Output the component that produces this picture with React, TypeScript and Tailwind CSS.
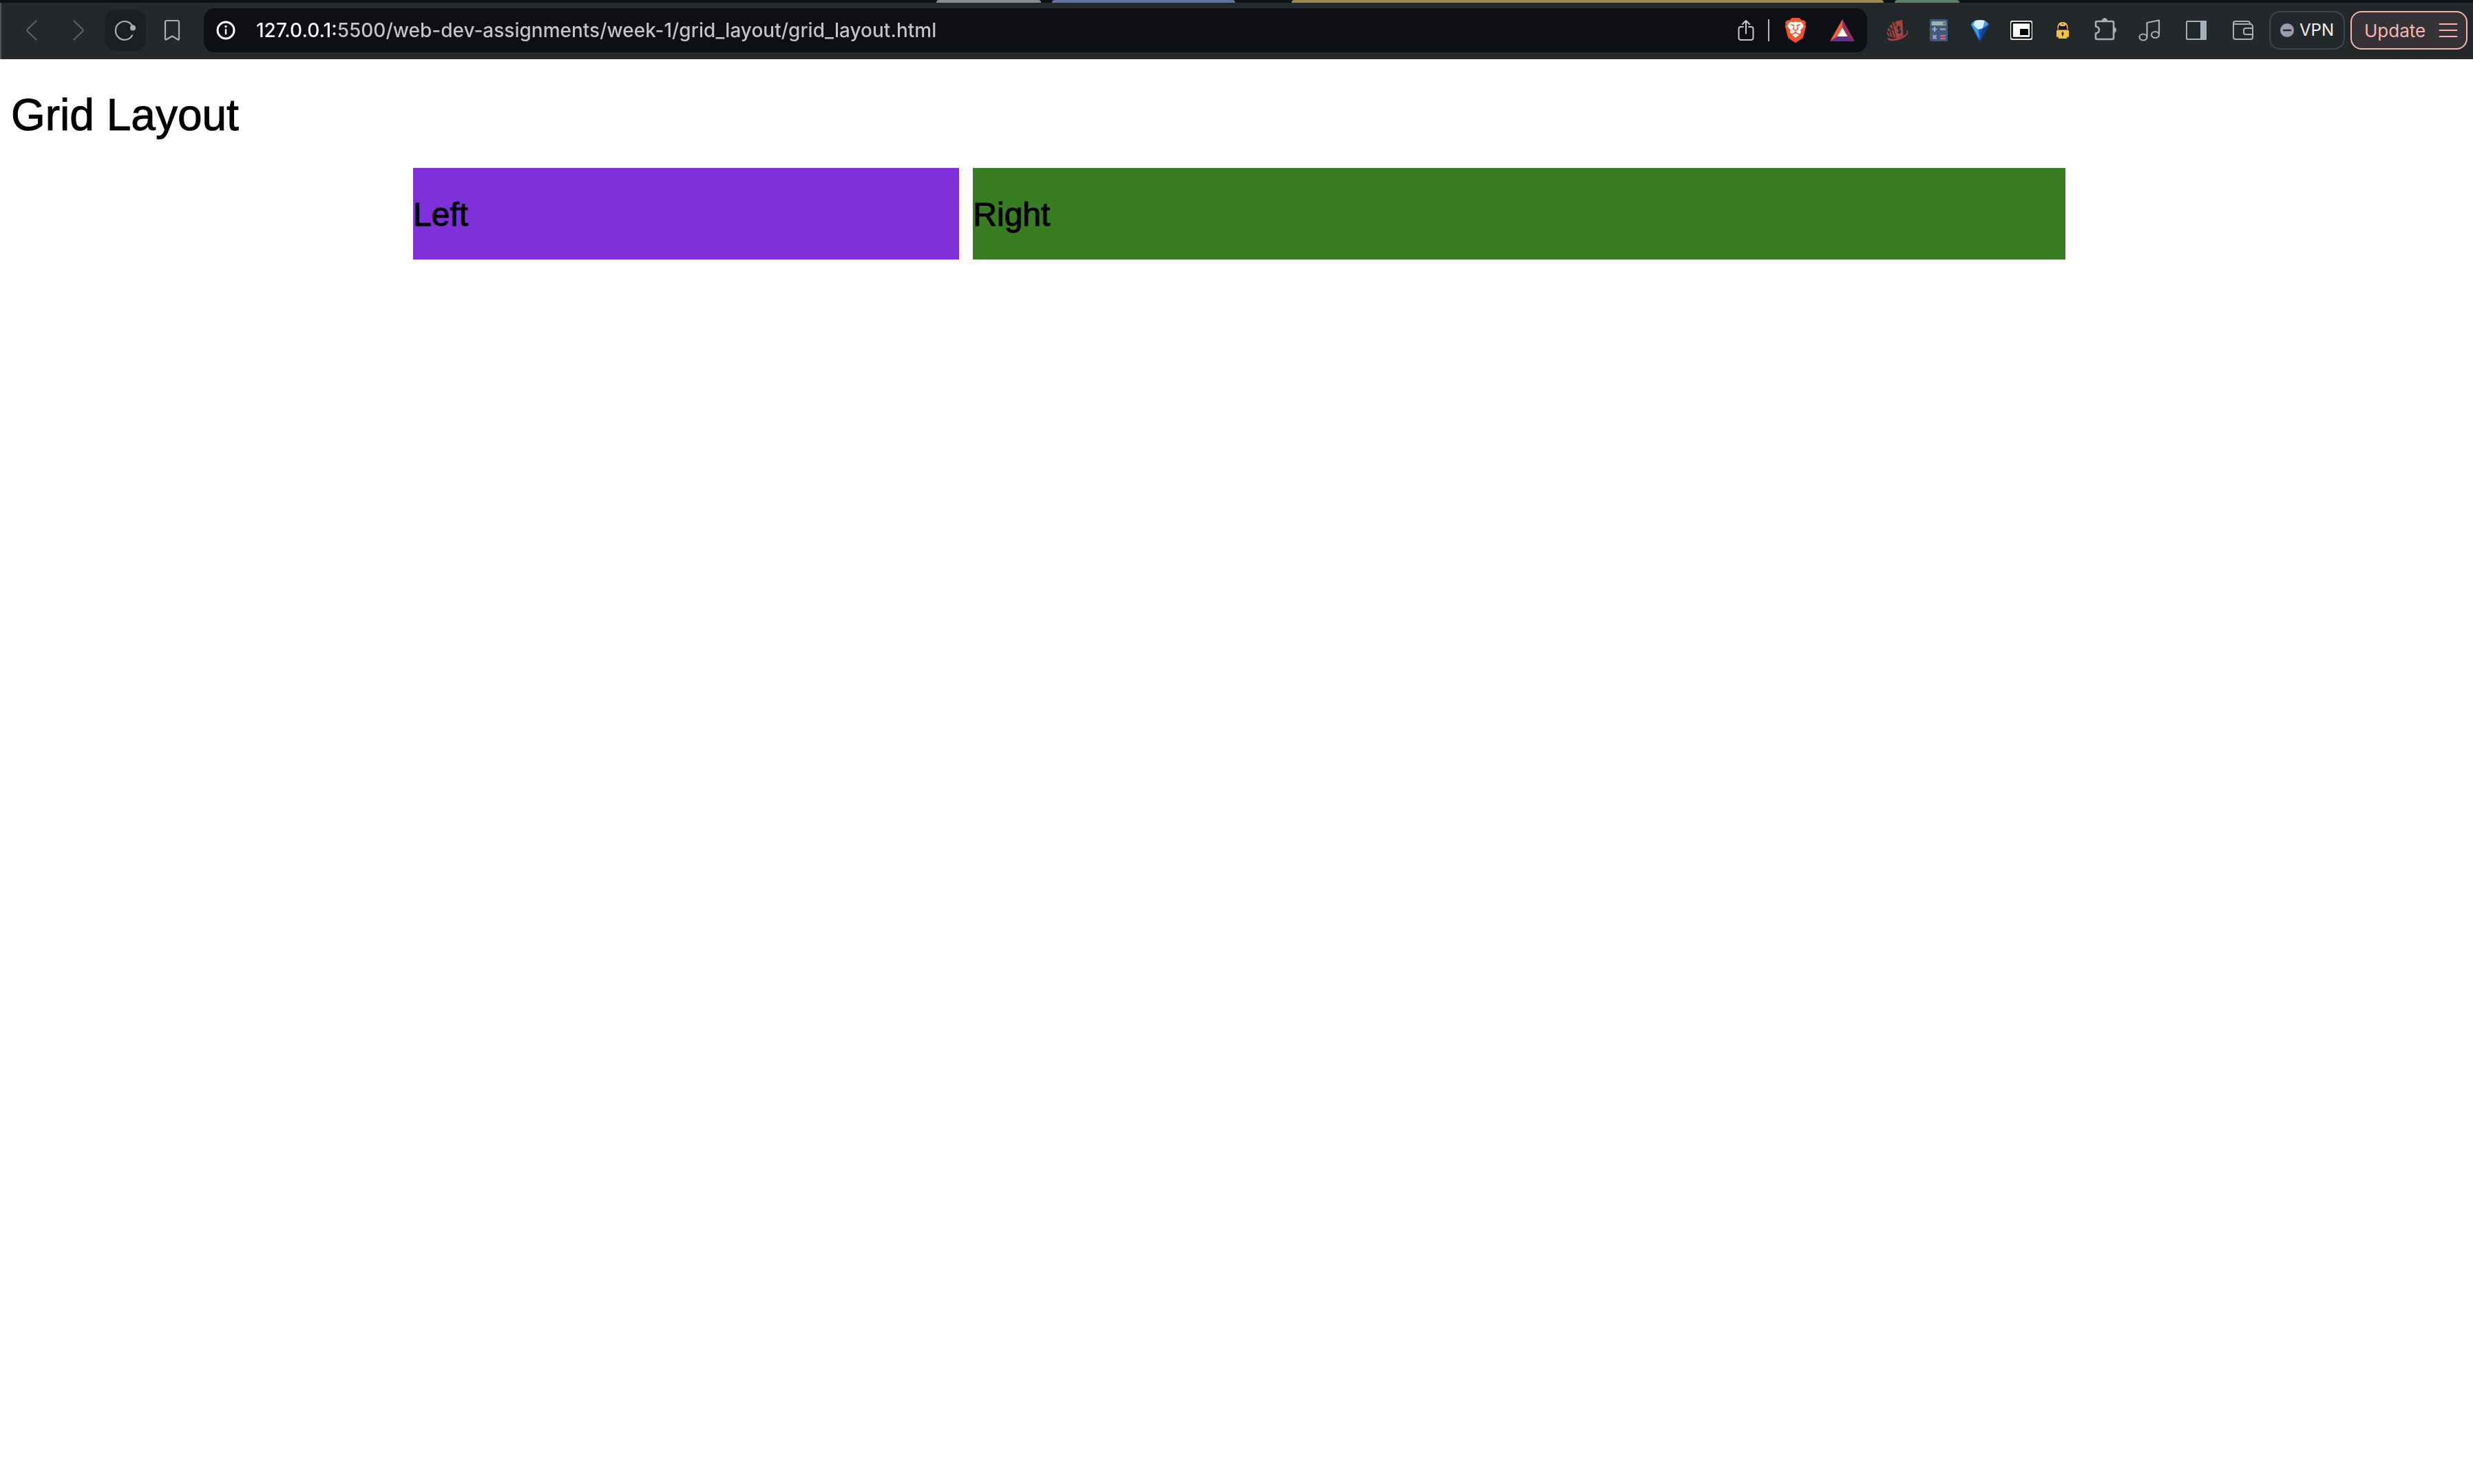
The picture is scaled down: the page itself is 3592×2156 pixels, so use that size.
import type { ReactNode } from "react";
import { SiBrave } from "react-icons/si";

function ToolButton({ label, className = "w-[60px]", children }: { label: string; className?: string; children: ReactNode }) {
  return (
    <button type="button" aria-label={label} className={`flex h-[60px] shrink-0 items-center justify-center rounded-2xl ${className}`}>
      {children}
    </button>
  );
}

const line = { fill: "none", stroke: "currentColor", strokeLinecap: "round", strokeLinejoin: "round" } as const;

function Chevron({ d }: { d: string }) {
  return (
    <svg width="16" height="30" viewBox="0 0 16 30" {...line} strokeWidth="2">
      <path d={d} />
    </svg>
  );
}

function ReloadIcon() {
  return (
    <svg width="32" height="32" viewBox="0 0 32 32" {...line} strokeWidth="2.200">
      <path d="M27 11.500A13 13.400 0 1 0 26 23.500" />
      <circle cx="27" cy="12.500" r="4" fill="currentColor" stroke="none" />
    </svg>
  );
}

function BookmarkIcon() {
  return (
    <svg width="24" height="32" viewBox="0 0 24 32" {...line} strokeWidth="2.200">
      <path d="M4 2h16q2 0 2 2v24.500q0 1.800-1.600 1L12 24.500l-8.400 5q-1.600.8-1.600-1V4q0-2 2-2z" />
    </svg>
  );
}

function InfoIcon() {
  return (
    <svg width="28" height="28" viewBox="0 0 28 28" {...line} strokeWidth="3">
      <circle cx="14" cy="14" r="12" />
      <path d="M14 13v6" strokeWidth="2.400" />
      <circle cx="14" cy="8.500" r="1.700" fill="currentColor" stroke="none" />
    </svg>
  );
}

function ShareIcon() {
  return (
    <svg width="24" height="32" viewBox="0 0 24 32" {...line} strokeWidth="2">
      <path d="M8 11H4.500Q1.500 11 1.500 14v12.500q0 3.500 3.500 3.500h14q3.500 0 3.500-3.500V14q0-3-3-3H16M12 20.500V2M7 7l5-5 5 5" />
    </svg>
  );
}

function BraveIcon() {
  return (
    <svg width="36" height="36" viewBox="0 0 36 36">
      <path fill="#fff" d="M10 5h16l6 6-5 15-9 5-9-5-5-15z" />
      <SiBrave size={36} color="#f1562b" />
    </svg>
  );
}

function RewardsIcon() {
  return (
    <svg width="36" height="32" viewBox="0 0 36 32">
      <path fill="#ff5a37" d="M18 0 0 32l11-7 7-13z" />
      <path fill="#9e2b63" d="m18 0 18 32-11-7-7-13z" />
      <path fill="#662e91" d="m0 32 11-7h14l11 7z" />
      <path fill="#fff" d="m18 12 7.500 13h-15z" />
    </svg>
  );
}

function CashIcon() {
  return (
    <svg width="32" height="32" viewBox="0 0 32 32" fill="#a7433f">
      <path d="M8.500 4.500Q13 4.500 16.500 2q3.500.5 6.500-1.500L24.500 24l-10 4z" />
      <path d="M4.800 9.500 7.500 7l6 20-2.500-.5zM1.500 14.500l2.300-2L9.500 26l-2.300-.5zM0 19.500l1.300-1.700 4.500 7.700-2-.5z" />
      <path d="M29 15.500q4.500 2.500 1 7-5.500 7-18.500 8.500-7.500.8-9-1.500L1.500 26.500q4 3 11 1.800Q26.500 25.500 30 19.500z" />
      <g fill="none" stroke="#23282b" strokeWidth="1.500">
        <path d="M20.500 12q-3.800-2-4.300.5c-.4 2.800 5 2.500 4.600 5.300-.4 2.400-3.300 2.200-4.800.7M18 9l.8 12" />
        <path d="M13.800 5q-2.600-.6-2.300 1c.3 1.500 2.700 1 2.500 2.600q-.4 1.300-2.200.5" strokeWidth="1.100" />
        <path d="M7 12.500l2 4M3.500 17l1.600 3" strokeWidth="1.200" />
      </g>
    </svg>
  );
}

function CalculatorIcon() {
  return (
    <svg width="26" height="32" viewBox="0 0 26 32">
      <rect width="26" height="32" rx="2" fill="#41597c" />
      <rect x="2.500" y="3" width="21" height="6" rx="1" fill="#9bb3a8" />
      <circle cx="21" cy="6" r="1.400" fill="none" stroke="#41504f" />
      <path d="M3.500 14.500h7M7 11v7M15 14.500h8M4.500 23l5 5.500m0-5.500-5 5.500" stroke="#a3adbd" strokeWidth="2" />
      <path d="M15 24h8M15 28h8" stroke="#c96a78" strokeWidth="2.400" />
    </svg>
  );
}

function DiamondIcon() {
  return (
    <svg width="26" height="30" viewBox="0 0 26 30">
      <path fill="#1759b5" d="M0 7q1-4 6-6 7-2 14 0 5 2 6 6L14 29q-1.500 2-3 0z" />
      <path fill="#3b9df0" d="M0 7q1-4 6-6l4.500 12L12 28z" />
      <path fill="#d9efff" d="M6 1q7-2 14 0l-3 11-6.500 2L3 7z" />
      <path fill="#4d9fe6" d="m20 1 5 5-8 6z" />
      <path fill="#0b2c68" d="m17 12-4.500 18L25 9z" opacity=".55" />
    </svg>
  );
}

function PictureIcon() {
  return (
    <svg width="32" height="28" viewBox="0 0 32 28">
      <rect width="32" height="28" rx="2.500" fill="#fff" />
      <rect x="2.500" y="3" width="27" height="22" rx="1" fill="#fff" stroke="#000" strokeWidth="2.600" />
      <rect x="14" y="12" width="12" height="9" fill="#000" />
    </svg>
  );
}

function LockIcon() {
  return (
    <svg width="18" height="24" viewBox="0 0 18 24">
      <path fill="#f5c242" d="M1.500 11V8q0-8 7.500-8t7.500 8v3z" />
      <path fill="#1d1736" d="M3.500 4.500h11l1 6.500h-13z" />
      <path fill="#f5c242" d="M5.500 4h7v2h-7zM0 13q0-1.500 2-1.500h14q2 0 2 1.500v9l-2-1-1 3H3l-1-3-2 1z" />
      <path fill="#23282b" d="m9 13.500 1.700 3L9 21.500l-1.700-5zM8 2h2v1.500H8z" />
    </svg>
  );
}

function PuzzleIcon() {
  return (
    <svg width="32" height="34" viewBox="0 0 32 34" {...line} strokeWidth="2.600">
      <path d="M4 6h22q2 0 2 2v22q0 2-2 2H4q-2 0-2-2v-6.500q5-1 5-5t-5-5V8q0-2 2-2z" />
      <path d="M11 5q1-3.500 4-3.500T19 5zM29 14.500q2.500 1 2.500 4t-2.500 4z" fill="currentColor" strokeWidth="1" />
    </svg>
  );
}

function MusicIcon() {
  return (
    <svg width="32" height="32" viewBox="0 0 32 32" {...line} strokeWidth="2.200">
      <path d="M12.500 25V5L30 1.500v20" />
      <ellipse cx="7" cy="26" rx="5.500" ry="4.500" />
      <ellipse cx="24.500" cy="22.500" rx="5.500" ry="4.500" />
    </svg>
  );
}

function SidePanelIcon() {
  return (
    <svg width="30" height="28" viewBox="0 0 30 28" {...line} strokeWidth="2">
      <rect x="1" y="1" width="28" height="26" rx="1.500" />
      <path d="M22 1h7v26h-7z" fill="currentColor" />
    </svg>
  );
}

function WalletIcon() {
  return (
    <svg width="30" height="28" viewBox="0 0 30 28" {...line} strokeWidth="2">
      <path d="M4 5h21q4 0 4 4v15q0 3-3 3H4q-3 0-3-3V4q0-3 3-3h18q2.500 0 3.500 3.500M1 4q0 1 3 1" />
      <path d="M29 11H19q-3 0-3 3v3q0 3 3 3h10" />
    </svg>
  );
}

function TabStrip() {
  return (
    <div className="flex h-1 items-stretch overflow-hidden bg-[#0f1016] pl-[1360px]">
      <span className="w-[152px] rounded-t-[4px] bg-[#8c8b90]" />
      <span className="ml-4 w-[266px] rounded-t-[4px] bg-[#61739e]" />
      <span className="ml-[82px] w-[860px] rounded-t-[4px] bg-[#9e884e]" />
      <span className="ml-4 w-[94px] rounded-t-[4px] bg-[#5c8068]" />
    </div>
  );
}

function AddressBar() {
  return (
    <div className="flex h-16 min-w-0 flex-1 items-center rounded-2xl bg-[#0e0f14] pr-1.5 text-[#c8c8c8]">
      <button type="button" aria-label="View site information" className="flex h-16 w-16 shrink-0 items-center justify-center text-white">
        <InfoIcon />
      </button>
      <input
        type="text"
        aria-label="Address"
        defaultValue="127.0.0.1:5500/web-dev-assignments/week-1/grid_layout/grid_layout.html"
        className="ml-3 h-10 min-w-0 flex-1 bg-[linear-gradient(90deg,#ffffff_116px,#c4c5c4_116px)] bg-clip-text text-[28px] leading-10 font-medium text-transparent outline-none"
      />
      <ToolButton label="Share this page"><ShareIcon /></ToolButton>
      <span className="mr-2 ml-0.5 h-8 w-0.5 bg-[#b5b6b8]" />
      <ToolButton label="Brave Shields"><BraveIcon /></ToolButton>
      <ToolButton label="Brave Rewards" className="ml-2 w-[60px]"><RewardsIcon /></ToolButton>
    </div>
  );
}

function Toolbar() {
  return (
    <header className="flex h-[82px] items-center border-l-2 border-[#505458] bg-[#23282b] pr-2 pb-0.5 pl-3.5 text-[#a4b1ba]">
      <nav aria-label="Navigation" className="mr-4 flex gap-2">
        <ToolButton label="Back" className="w-[60px] text-[#5d6468]"><Chevron d="M14.500 1.500 2 13.500q-1.200 1.500 0 3l12.500 12" /></ToolButton>
        <ToolButton label="Forward" className="w-[60px] text-[#5d6468]"><Chevron d="M1.500 1.500 14 13.500q1.200 1.500 0 3l-12.500 12" /></ToolButton>
        <ToolButton label="Reload" className="w-[60px] bg-[#1b1f21]"><ReloadIcon /></ToolButton>
        <ToolButton label="Bookmark"><BookmarkIcon /></ToolButton>
      </nav>
      <AddressBar />
      <div className="ml-3.5 flex">
        <ToolButton label="Coupons"><CashIcon /></ToolButton>
        <ToolButton label="Calculator"><CalculatorIcon /></ToolButton>
        <ToolButton label="Diamond"><DiamondIcon /></ToolButton>
        <ToolButton label="Picture in picture"><PictureIcon /></ToolButton>
        <ToolButton label="Lock"><LockIcon /></ToolButton>
      </div>
      <div className="flex items-center gap-2">
        <ToolButton label="Extensions" className="w-[58px] pb-1 pl-1.5"><PuzzleIcon /></ToolButton>
        <ToolButton label="Media"><MusicIcon /></ToolButton>
        <ToolButton label="Side panel"><SidePanelIcon /></ToolButton>
        <ToolButton label="Wallet"><WalletIcon /></ToolButton>
        <button type="button" className="flex h-14 w-[110px] items-center gap-2 rounded-2xl border-2 border-[#3f484d] pl-3.5 text-2xl text-[#f0f0f3]">
          <svg width="20" height="20" viewBox="0 0 20 20" className="shrink-0">
            <circle cx="10" cy="10" r="10" fill="#9a9bb0" />
            <path d="M5 10h10" stroke="#23282b" strokeWidth="2.400" strokeLinecap="round" />
          </svg>
          VPN
        </button>
        <button type="button" className="flex h-14 w-[170px] items-center justify-between rounded-2xl border-2 border-[#f9b4b0] bg-[#343234] pr-3 pl-[18px] text-[26px] text-[#f9b4b0]">
          Update
          <svg width="28" height="22" viewBox="0 0 28 22" {...line} strokeWidth="2">
            <path d="M1.500 2h25M1.500 11h25M1.500 20h25" />
          </svg>
        </button>
      </div>
    </header>
  );
}

export default function App() {
  return (
    <div className="min-h-screen bg-white font-['Inter',sans-serif]">
      <TabStrip />
      <Toolbar />
      <main className="pt-11 pr-2 pl-4 font-['Liberation_Sans',Arial,sans-serif] text-black">
        <h1 className="text-[64px] leading-[74px] [-webkit-text-stroke:1px_black]">Grid Layout</h1>
        <div className="mx-auto mt-10 grid w-full max-w-[2400px] grid-cols-[1fr_2fr] gap-5">
          <section className="bg-[#7f30d8] pt-[41px] pb-[39px]">
            <h2 className="text-5xl leading-[53px] [-webkit-text-stroke:1px_black]">Left</h2>
          </section>
          <section className="bg-[#387d22] pt-[41px] pb-[39px]">
            <h2 className="text-5xl leading-[53px] [-webkit-text-stroke:1px_black]">Right</h2>
          </section>
        </div>
      </main>
    </div>
  );
}
